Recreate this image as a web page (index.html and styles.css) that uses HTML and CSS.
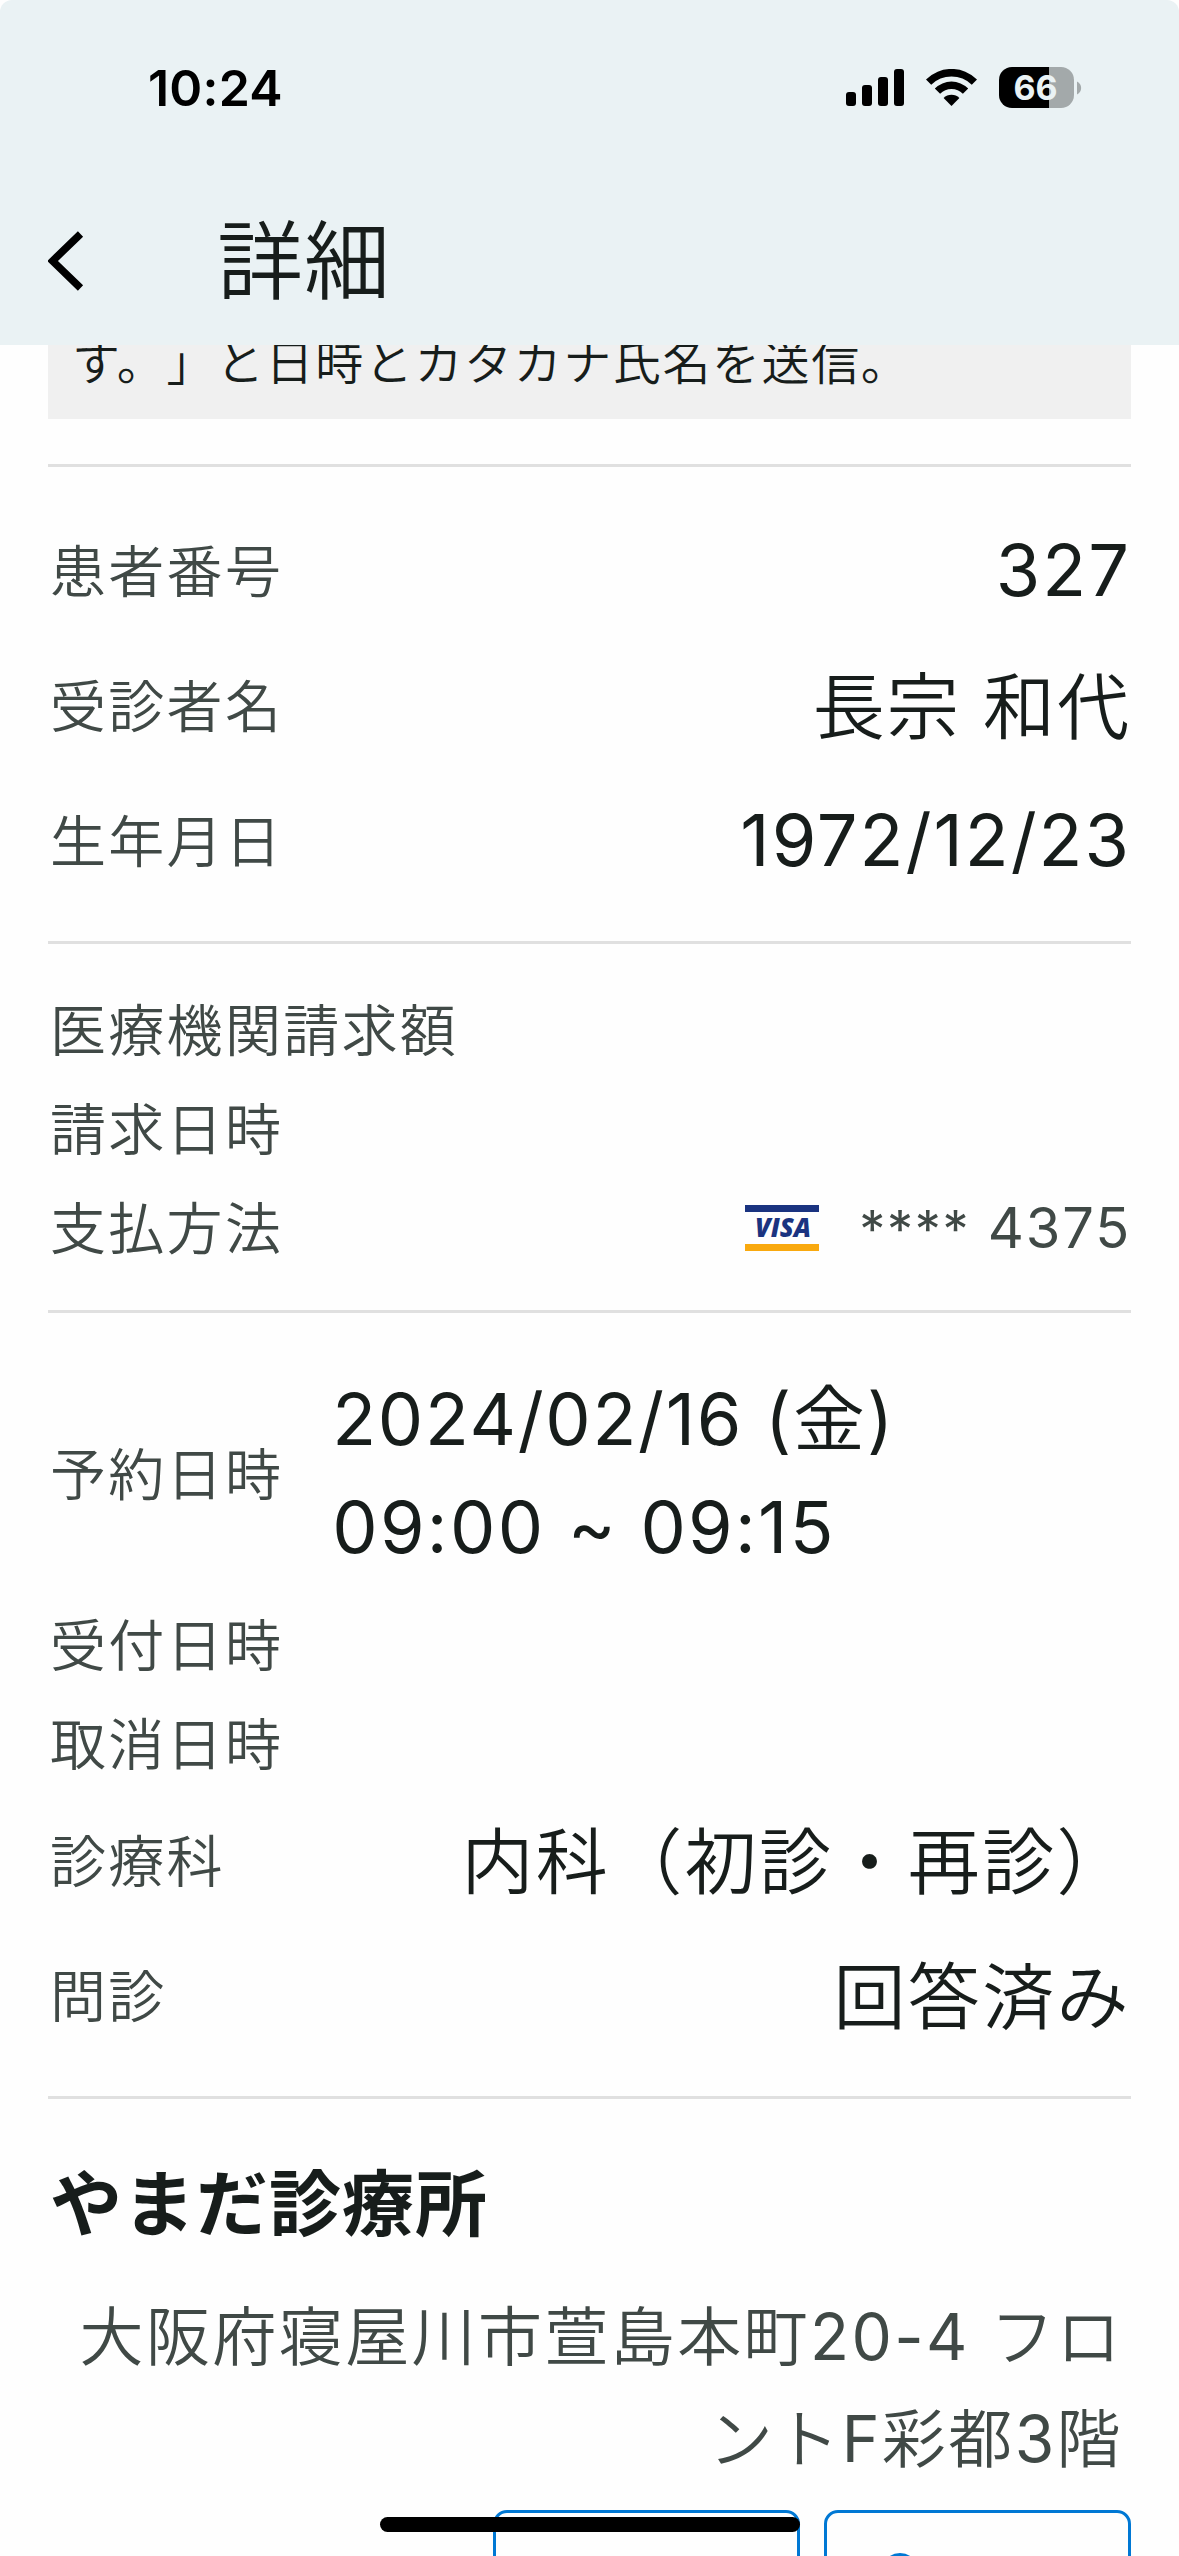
FILE: index.html
```html
<!DOCTYPE html>
<html lang="ja">
<head>
<meta charset="utf-8">
<title>詳細</title>
<link rel="stylesheet" href="styles.css">
</head>
<body>
<div class="screen">
  <header class="header">
    <div class="status">
      <span class="clock">10:24</span>
      <div class="indicators">
        <svg class="signal" width="58" height="37" viewBox="0 0 58 37"><rect x="0" y="23" width="10" height="14" rx="3"/><rect x="16" y="16" width="10" height="21" rx="3"/><rect x="32" y="8" width="10" height="29" rx="3"/><rect x="48" y="0" width="10" height="37" rx="3"/></svg>
        <svg class="wifi" width="51" height="37" viewBox="0 0 51 37"><path d="M0 10.500a36 36 0 0 1 51 0l-5.200 5.300a28.700 28.700 0 0 0-40.600 0z"/><path d="M8.800 19.500a23.600 23.600 0 0 1 33.400 0l-5.300 5.300a16.200 16.200 0 0 0-22.800 0z"/><path d="M17.600 29a11.200 11.200 0 0 1 15.800 0L25.500 37z"/></svg>
        <div class="battery"><span class="level">66</span></div>
        <svg class="nub" width="5" height="14" viewBox="0 0 5 14"><path d="M0 0.500C5.500 3 5.500 11 0 13.500z"/></svg>
      </div>
    </div>
    <div class="appbar">
      <svg class="back" width="36" height="60" viewBox="0 0 36 60"><path d="M32.500 3L4.500 30l28 27"/></svg>
      <h1 class="title">詳細</h1>
    </div>
  </header>
  <main class="content">
    <div class="note"><p class="note-text">す。」と日時とカタカナ氏名を送信。</p></div>
    <section class="group">
      <div class="row tall"><span class="label">患者番号</span><span class="value numeric">327</span></div>
      <div class="row tall"><span class="label">受診者名</span><span class="value">長宗 和代</span></div>
      <div class="row tall"><span class="label">生年月日</span><span class="value numeric">1972/12/23</span></div>
    </section>
    <section class="group">
      <div class="row"><span class="label">医療機関請求額</span></div>
      <div class="row"><span class="label">請求日時</span></div>
      <div class="row"><span class="label">支払方法</span>
        <span class="payment">
          <svg class="visa" width="74" height="46" viewBox="0 0 74 46"><rect class="visa-blue" width="74" height="7"/><rect class="visa-gold" y="39" width="74" height="7"/><text class="visa-text" x="10" y="32" textLength="56" lengthAdjust="spacingAndGlyphs">VISA</text></svg>
          <span class="card"><span class="mask">****</span> 4375</span>
        </span>
      </div>
    </section>
    <section class="group schedule">
      <div class="row double"><span class="label">予約日時</span><span class="value slot"><span class="digits date">2024/02/16 (</span>金<span class="digits">)</span><br><span class="digits time">09:00 ~ 09:15</span></span></div>
      <div class="row"><span class="label">受付日時</span></div>
      <div class="row"><span class="label">取消日時</span></div>
      <div class="row tall"><span class="label">診療科</span><span class="value wide">内科（初診・再診）</span></div>
      <div class="row tall"><span class="label">問診</span><span class="value wide">回答済み</span></div>
    </section>
    <section class="clinic">
      <h2 class="clinic-name">やまだ診療所</h2>
      <p class="address">大阪府寝屋川市萱島本町<span class="digits">20-4</span> フロ<br>ント<span class="digits">F</span>彩都<span class="digits">3</span>階</p>
      <div class="actions">
        <button class="action" type="button"></button>
        <button class="action" type="button"><svg class="pin" width="36" height="46" viewBox="0 0 36 46"><path d="M18 2C9 2 2 9 2 18c0 12 16 26 16 26s16-14 16-26C34 9 27 2 18 2z"/></svg></button>
      </div>
    </section>
  </main>
  <div class="home"></div>
</div>
</body>
</html>
```
FILE: styles.css
```css
* { box-sizing: border-box; }
body {
  margin: 0;
  background: #fff;
  color: #171d1b;
  font-family: Inter, "Noto Sans CJK JP", sans-serif;
  font-weight: 350;
}
h1, h2, p { margin: 0; font-weight: inherit; }
.digits { font-weight: 400; }
.date { letter-spacing: 1.7px; }
.time { letter-spacing: 2.3px; }
.screen {
  position: relative;
  width: 1179px;
  height: 2556px;
  overflow: hidden;
  background: #fefefe;
}
.header {
  height: 345px;
  background: #eaf2f4;
  border-radius: 12px 12px 0 0;
}
.status {
  height: 175px;
  padding: 0 97px 0 148px;
  display: flex;
  align-items: center;
  justify-content: space-between;
}
.clock {
  color: #000;
  font-size: 50px;
  font-weight: 600;
  letter-spacing: 0.2px;
}
.indicators { display: flex; align-items: center; }
.wifi { margin-left: 22px; }
.battery {
  width: 75px;
  height: 41px;
  margin-left: 22px;
  border-radius: 13px;
  background: linear-gradient(90deg, #000 50px, #a3a9aa 50px);
  display: flex;
  align-items: center;
  justify-content: center;
}
.level {
  color: #eaf2f4;
  font-size: 34px;
  font-weight: 700;
  line-height: 41px;
  margin-right: 2px;
}
.nub { margin-left: 3px; fill: #a3a9aa; }
.appbar {
  height: 171px;
  padding-left: 48px;
  display: flex;
  align-items: center;
}
.back { fill: none; stroke: #000; stroke-width: 7.500; }
.title {
  margin: 2px 0 0 133px;
  font-size: 86px;
  line-height: 120px;
  letter-spacing: 1px;
}
.content { padding: 0 48px; }
.note {
  height: 74px;
  margin-bottom: 45px;
  padding: 0 24px;
  overflow: hidden;
  background: #f0f0f0;
  display: flex;
  align-items: flex-end;
}
.note-text {
  height: 92px;
  font-size: 48px;
  line-height: 72px;
  letter-spacing: 1.6px;
  text-spacing-trim: space-all;
  white-space: nowrap;
}
.group {
  padding: 37px 0 32px;
  border-top: 3px solid #e0e0e0;
}
.schedule { padding-top: 40px; }
.row {
  height: 99px;
  padding: 0 0 0 2px;
  display: flex;
  align-items: center;
  justify-content: space-between;
}
.tall { height: 135px; }
.double { height: 243px; justify-content: flex-start; }
.label {
  color: #404946;
  font-size: 56px;
  line-height: 72px;
  letter-spacing: 2.300px;
}
.value {
  font-size: 72px;
  line-height: 108px;
  letter-spacing: 2px;
}
.wide { letter-spacing: 2.4px; }
.numeric { padding-bottom: 3px; font-weight: 400; }
.slot { margin-left: 49px; padding-bottom: 4px; }
.payment { display: flex; align-items: center; color: #404946; }
.visa { margin: 0 40px 2px 0; }
.visa-blue, .visa-text { fill: #1a3380; }
.visa-gold { fill: #f9a90f; }
.visa-text { font: italic 800 26px "Open Sans", sans-serif; }
.card { font-size: 56px; font-weight: 400; line-height: 72px; letter-spacing: 1.8px; }
.mask { font-size: 52px; letter-spacing: 1.7px; }
.clinic { border-top: 3px solid #e0e0e0; padding-top: 51px; }
.clinic-name {
  padding-left: 2px;
  font-size: 72px;
  font-weight: 700;
  line-height: 108px;
  letter-spacing: 1px;
}
.address {
  margin-top: 28px;
  padding-right: 8px;
  color: #404946;
  font-size: 64px;
  line-height: 102px;
  letter-spacing: 2.4px;
  text-align: right;
  white-space: nowrap;
}
.actions { margin-top: 20px; display: flex; justify-content: flex-end; gap: 24px; }
.action {
  width: 307px;
  height: 120px;
  padding: 40px 0 0 55px;
  border: 3px solid #0078d4;
  border-radius: 14px;
  background: #fefefe;
  display: flex;
  align-items: flex-start;
}
.pin { fill: none; stroke: #0078d4; stroke-width: 4; }
.home {
  position: absolute;
  left: 380px;
  top: 2517px;
  width: 420px;
  height: 15px;
  border-radius: 8px;
  background: #000;
}
```
